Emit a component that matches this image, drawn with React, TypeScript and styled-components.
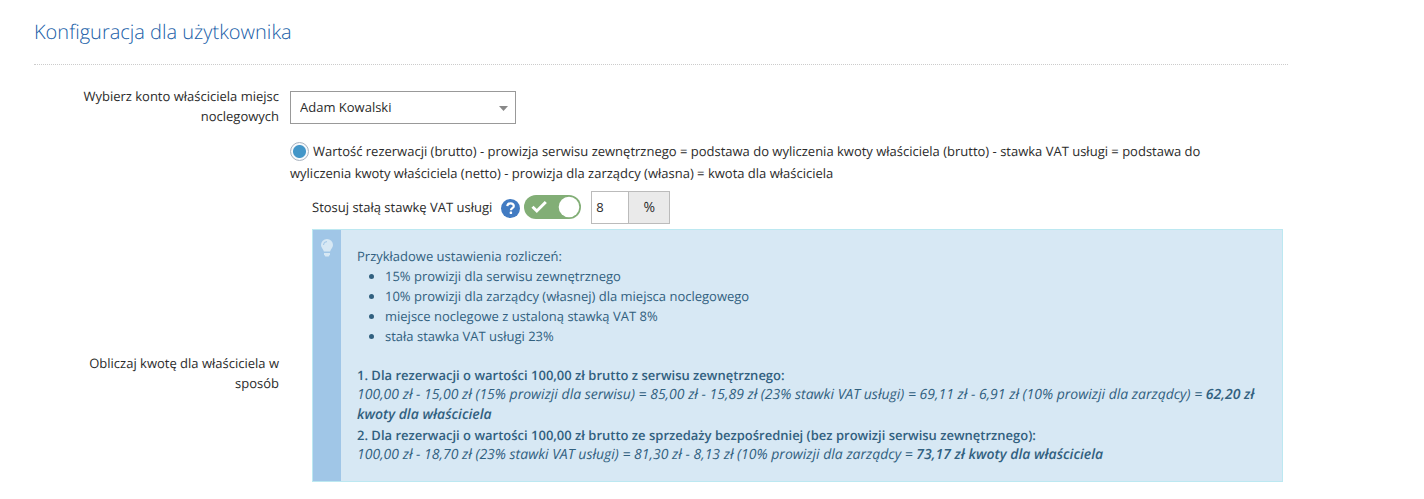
import React from "react";
import styled, { createGlobalStyle } from "styled-components";

const GlobalStyle = createGlobalStyle`
  *, *::before, *::after { box-sizing: border-box; }
  body {
    margin: 0;
    background: #fff;
    color: #2b2b2b;
    font-family: "Open Sans", "Noto Sans", sans-serif;
    font-size: 13px;
    line-height: 20px;
    text-rendering: geometricPrecision;
  }
`;

const Page = styled.main`
  padding: 16px 136px 16px 34px;
`;

const Heading = styled.h1`
  margin: 0;
  padding-bottom: 16px;
  border-bottom: 1px dotted #ccc;
  color: #2060a8;
  font-size: 20px;
  font-weight: 300;
  line-height: 32px;
`;

const FormRow = styled.div<{ $top: number }>`
  display: grid;
  grid-template-columns: 245px minmax(0, 1fr);
  column-gap: 11px;
  align-items: start;
  padding-right: 5px;
  margin-top: ${(p) => p.$top}px;
`;

const RowLabel = styled.label<{ $top?: number }>`
  padding-left: 32px;
  margin-top: ${(p) => p.$top ?? 0}px;
  text-align: right;
`;

const SelectWrap = styled.div`
  position: relative;
  width: 226px;
  margin-top: 5px;
`;

const Select = styled.select`
  appearance: none;
  display: block;
  width: 100%;
  height: 33px;
  padding: 0 24px 1px 9px;
  border: 1px solid #999;
  border-radius: 0;
  background: #fff;
  color: inherit;
  font: inherit;
`;

const SelectArrow = styled.svg`
  position: absolute;
  right: 8px;
  top: 15px;
  pointer-events: none;
`;

const RadioLabel = styled.label`
  display: block;
  padding-right: 40px;
  line-height: 22px;
`;

const Radio = styled.input`
  appearance: none;
  width: 19px;
  height: 19px;
  margin: 2px 4px 0 0;
  border: 1px solid #a9b3bf;
  border-radius: 50%;
  background: #f6f9fc;
  vertical-align: top;

  &:checked {
    background: radial-gradient(circle, #4396c8 0 6px, #f6f9fc 7px);
  }
`;

const Nested = styled.div`
  padding-left: 22px;
`;

const VatRow = styled.div`
  display: flex;
  align-items: center;
  height: 33px;
  margin: 7px 0 5px;
`;

const VatLabel = styled.label`
  padding-bottom: 2px;
`;

const HelpButton = styled.button`
  display: flex;
  margin: 2px 4px 0 9px;
  padding: 0;
  border: 0;
  background: none;
`;

const Toggle = styled.span`
  position: relative;
  display: flex;
  margin: 0 10px 2px 0;
`;

const ToggleInput = styled.input`
  appearance: none;
  width: 57px;
  height: 24px;
  margin: 0;
  border-radius: 12px;
  background: #bbb;

  &:checked {
    background: #82ae76;
  }
`;

const ToggleFace = styled.svg`
  position: absolute;
  inset: 0;
  pointer-events: none;
`;

const RateInput = styled.input`
  width: 37px;
  height: 33px;
  padding: 0 4px 1px;
  border: 1px solid #bbb;
  border-right: 0;
  border-radius: 0;
  color: inherit;
  font: inherit;
`;

const Addon = styled.span`
  width: 42px;
  border: 1px solid #bbb;
  background: #eaeaea;
  font-size: 14px;
  line-height: 31px;
  text-align: center;
`;

const Tip = styled.section`
  display: flex;
  border: 1px solid #bce8f1;
  background: #d7e8f4;
  color: #31607f;
`;

const TipStrip = styled.div`
  flex: 0 0 28px;
  padding-top: 9px;
  background: #a0c6e7;
  text-align: center;
`;

const TipBody = styled.div`
  flex: 1;
  padding: 16px;

  strong { font-weight: 600; }
`;

const TipList = styled.ul`
  margin: 0 0 19px;
  padding-left: 28px;
`;

const Line = styled.p`
  margin: 0;
`;

const Formula = styled(Line)`
  font-size: 14px;
  font-style: italic;
`;

export default function App() {
  return (
    <>
      <GlobalStyle />
      <Page>
        <Heading>Konfiguracja dla użytkownika</Heading>

        <FormRow $top={21}>
          <RowLabel htmlFor="owner">Wybierz konto właściciela miejsc noclegowych</RowLabel>
          <SelectWrap>
            <Select id="owner" defaultValue="adam">
              <option value="adam">Adam Kowalski</option>
            </Select>
            <SelectArrow width="9" height="5" viewBox="0 0 9 5" aria-hidden="true">
              <path d="M0 0h9L4.5 5z" fill="#888" />
            </SelectArrow>
          </SelectWrap>
        </FormRow>

        <FormRow $top={14}>
          <RowLabel htmlFor="method" $top={213}>Obliczaj kwotę dla właściciela w sposób</RowLabel>
          <div>
            <RadioLabel>
              <Radio id="method" type="radio" name="method" defaultChecked />
              Wartość rezerwacji (brutto) - prowizja serwisu zewnętrznego = podstawa do wyliczenia
              kwoty właściciela (brutto) - stawka VAT usługi = podstawa do wyliczenia kwoty
              właściciela (netto) - prowizja dla zarządcy (własna) = kwota dla właściciela
            </RadioLabel>

            <Nested>
              <VatRow>
                <VatLabel htmlFor="fixed-vat">Stosuj stałą stawkę VAT usługi</VatLabel>
                <HelpButton type="button" aria-label="Pomoc">
                  <svg width="19" height="19" viewBox="0 0 19 19" aria-hidden="true">
                    <circle cx="9.5" cy="9.5" r="9.5" fill="#427bc2" />
                    <path
                      d="M6.3 7.1C6.5 5.2 7.8 4.3 9.6 4.3c1.9 0 3.2 1 3.2 2.6 0 2.3-2.9 2.2-2.9 4.3"
                      fill="none"
                      stroke="#fff"
                      strokeWidth="2.2"
                    />
                    <rect x="8.7" y="12.6" width="2.4" height="2.4" rx="0.4" fill="#fff" />
                  </svg>
                </HelpButton>
                <Toggle>
                  <ToggleInput id="fixed-vat" type="checkbox" role="switch" defaultChecked />
                  <ToggleFace width="57" height="24" viewBox="0 0 57 24" aria-hidden="true">
                    <path d="M8.5 11.8l4.3 4.2 9-9" fill="none" stroke="#fff" strokeWidth="3" />
                    <circle cx="45" cy="12" r="10.3" fill="#fff" />
                  </ToggleFace>
                </Toggle>
                <RateInput id="rate" type="text" defaultValue="8" aria-label="Stawka VAT" />
                <Addon>%</Addon>
              </VatRow>

              <Tip>
                <TipStrip>
                  <svg width="12" height="18" viewBox="0 0 12 18" aria-hidden="true">
                    <path
                      d="M6 0a6 6 0 0 1 6 6c0 2.7-2.2 3.9-2.9 6.5H2.9C2.2 9.9 0 8.7 0 6a6 6 0 0 1 6-6z"
                      fill="#d7e8f4"
                    />
                    <path d="M2.5 6A3.4 3.4 0 0 1 6 2.6" fill="none" stroke="#a0c6e7" strokeWidth="1" />
                    <path d="M3 14h6v1.3L7.7 17.5H4.3L3 15.3z" fill="#d7e8f4" />
                  </svg>
                </TipStrip>
                <TipBody>
                  <Line>Przykładowe ustawienia rozliczeń:</Line>
                  <TipList>
                    <li>15% prowizji dla serwisu zewnętrznego</li>
                    <li>10% prowizji dla zarządcy (własnej) dla miejsca noclegowego</li>
                    <li>miejsce noclegowe z ustaloną stawką VAT 8%</li>
                    <li>stała stawka VAT usługi 23%</li>
                  </TipList>
                  <Line>
                    <strong>1. Dla rezerwacji o wartości 100,00 zł brutto z serwisu zewnętrznego:</strong>
                  </Line>
                  <Formula>
                    100,00 zł - 15,00 zł (15% prowizji dla serwisu) = 85,00 zł - 15,89 zł (23% stawki
                    VAT usługi) = 69,11 zł - 6,91 zł (10% prowizji dla zarządcy) ={" "}
                    <strong>62,20 zł kwoty dla właściciela</strong>
                  </Formula>
                  <Line>
                    <strong>
                      2. Dla rezerwacji o wartości 100,00 zł brutto ze sprzedaży bezpośredniej (bez
                      prowizji serwisu zewnętrznego):
                    </strong>
                  </Line>
                  <Formula>
                    100,00 zł - 18,70 zł (23% stawki VAT usługi) = 81,30 zł - 8,13 zł (10% prowizji dla
                    zarządcy = <strong>73,17 zł kwoty dla właściciela</strong>
                  </Formula>
                </TipBody>
              </Tip>
            </Nested>
          </div>
        </FormRow>
      </Page>
    </>
  );
}
